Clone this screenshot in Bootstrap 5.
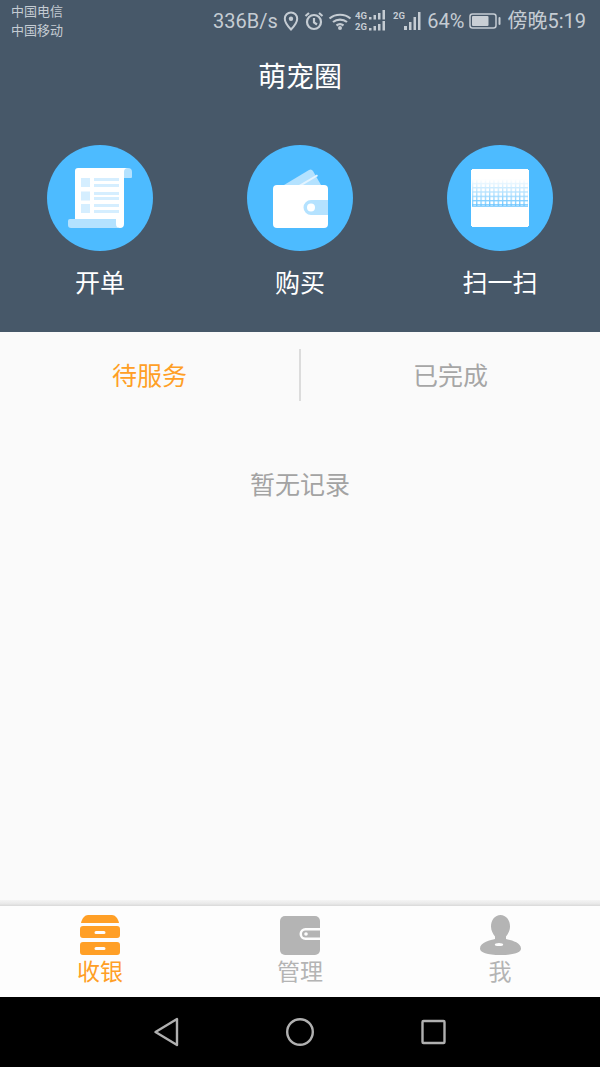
<!DOCTYPE html>
<html lang="zh-CN">
  <head>
    <meta charset="UTF-8" />
    <meta name="viewport" content="width=device-width, initial-scale=1.0" />
    <title>萌宠圈</title>
    <link href="https://cdn.jsdelivr.net/npm/bootstrap@5.3.0/dist/css/bootstrap.min.css" rel="stylesheet" />
    <style>
      html, body { height: 100%; }
      body {
        font-family: Roboto, "Noto Sans CJK SC", sans-serif;
        background: #fafafa;
        overflow: hidden;
      }
      .app-shell { width: 600px; height: 1067px; }

      /* top dark area */
      .top-panel { background: #475869; height: 332px; flex: none; }
      .status-row { height: 40px; padding: 3px 14px 0 11px; color: #c5ccd3; }
      .carrier-col { font-size: 13px; line-height: 19px; width: 202px; margin-top: -1px; }
      .net-speed, .status-txt { font-size: 20px; line-height: 40px; margin-top: -2px; }
      .status-group { height: 37px; }
      .status-ico { display: block; margin-top: -2px; }
      .gap-s3 { margin-left: 3px; }
      .gap-s4 { margin-left: 4px; }
      .gap-s5 { margin-left: 5px; }
      .gap-s6 { margin-left: 6px; }
      .page-title { color: #fff; font-size: 28px; line-height: 30px; margin-top: 23px; text-align: center; }
      .action-row { margin-top: 52px; }
      .action-cell { width: 200px; }
      .action-disc { width: 106px; height: 106px; border-radius: 50%; background: #4dbbff; }
      .action-name { color: #fff; font-size: 25px; line-height: 30px; margin-top: 18px; }

      /* order tabs */
      .tab-strip { height: 88px; flex: none; padding-top: 17px; padding-bottom: 19px; }
      .tab-pick { flex: 1; font-size: 25px; line-height: 52px; padding-top: 2px; text-align: center; color: #a6a6a6; }
      .tab-pick.is-on { color: #ff9f26; }
      .tab-line { width: 2px; background: #dcdcdc; }
      .empty-note { color: #a3a3a3; font-size: 25px; line-height: 30px; text-align: center; margin-top: 51px; }
      .main-fill { flex: 1; }

      /* bottom bar */
      .bar-shade { height: 6px; flex: none; background: linear-gradient(#f4f4f4, #e9e9e9 60%, #d9d9d9); }
      .bottom-bar { height: 91px; flex: none; background: #fdfdfd; }
      .bar-item { width: 200px; padding-top: 9px; color: #b4b4b4; font-size: 23px; line-height: 26px; }
      .bar-item.is-on { color: #ff9f26; }
      .bar-item svg { display: block; margin-bottom: 5px; }
      .sys-nav { height: 70px; flex: none; background: #000; }
    </style>
  </head>
  <body>
    <div class="app-shell d-flex flex-column">
      <header class="top-panel">
        <div class="status-row d-flex align-items-start">
          <div class="carrier-col">
            <div>中国电信</div>
            <div>中国移动</div>
          </div>
          <div class="net-speed">336B/s</div>
          <div class="status-group d-flex align-items-center ms-auto">
            <!-- location pin -->
            <svg class="status-ico" width="16" height="20" viewBox="0 0 16 20">
              <path d="M8 1.500a6.200 6.200 0 0 0-6.200 6.200C1.800 12 8 18.500 8 18.500S14.200 12 14.200 7.700A6.200 6.200 0 0 0 8 1.500z" fill="none" stroke="#c5ccd3" stroke-width="2" />
              <circle cx="8" cy="7.700" r="2.200" fill="#c5ccd3" />
            </svg>
            <!-- alarm -->
            <svg class="status-ico gap-s5" width="20" height="20" viewBox="0 0 20 20" fill="none" stroke="#c5ccd3" stroke-width="2.200">
              <circle cx="10" cy="11" r="7" />
              <path d="M10 7v4.500l3 2M1.500 5 5 2M18.500 5 15 2" />
            </svg>
            <!-- wifi -->
            <svg class="status-ico gap-s4" width="24" height="20" viewBox="0 0 24 20" fill="none" stroke="#c5ccd3" stroke-width="2.200">
              <path d="M1.500 7.500c6-5 15-5 21 0M5 11c4-3.300 10-3.300 14 0M8.500 14.500c2-1.500 5-1.500 7 0" />
              <circle cx="12" cy="17" r="2" fill="#c5ccd3" stroke="none" />
            </svg>
            <!-- dual sim signal -->
            <svg class="status-ico gap-s3" width="33" height="22" viewBox="0 0 33 22" fill="#c5ccd3">
              <text x="0" y="9" font-family="Roboto" font-size="9.500" font-weight="700">4G</text>
              <text x="0" y="20" font-family="Roboto" font-size="9.500" font-weight="700">2G</text>
              <rect x="14" y="7" width="2.500" height="2.500" /><rect x="18.500" y="5" width="2.500" height="4.500" /><rect x="23" y="3" width="2.500" height="6.500" /><rect x="27.500" y="0" width="2.500" height="9.500" />
              <rect x="14" y="18" width="2.500" height="2.500" /><rect x="18.500" y="16" width="2.500" height="4.500" /><rect x="23" y="14" width="2.500" height="6.500" /><rect x="27.500" y="11" width="2.500" height="9.500" />
            </svg>
            <svg class="status-ico gap-s5" width="31" height="22" viewBox="0 0 31 22" fill="#c5ccd3">
              <text x="0" y="9" font-family="Roboto" font-size="9.500" font-weight="700">2G</text>
              <rect x="11" y="16" width="3" height="4" /><rect x="16" y="12" width="2.500" height="8" /><rect x="20.500" y="7" width="2.500" height="13" /><rect x="25" y="2" width="2.500" height="18" />
            </svg>
            <div class="status-txt gap-s3">64%</div>
            <!-- battery -->
            <svg class="status-ico gap-s5" width="32" height="16" viewBox="0 0 32 16">
              <rect x="1" y="1" width="26" height="14" rx="2.500" fill="none" stroke="#c5ccd3" stroke-width="1.500" />
              <rect x="3" y="3" width="16.500" height="10" rx="1" fill="#c9cfd5" />
              <rect x="29.500" y="4" width="2" height="8" rx="1" fill="#c5ccd3" />
            </svg>
            <div class="status-txt gap-s6">傍晚5:19</div>
          </div>
        </div>

        <div class="page-title">萌宠圈</div>

        <div class="action-row d-flex">
          <div class="action-cell d-flex flex-column align-items-center">
            <div class="action-disc d-flex align-items-center justify-content-center">
              <!-- receipt scroll -->
              <svg width="64" height="60" viewBox="0 0 64 60">
                <path d="M2 51h48v9H3a3 3 0 0 1-3-3v-4a2 2 0 0 1 2-2z" fill="#b4e2ff" />
                <path d="M56 0h4a4 4 0 0 1 4 4v5a1 1 0 0 1-1 1h-7z" fill="#b4e2ff" />
                <path d="M10 0h50a4 4 0 0 0-4 4v52a4 4 0 0 1-8 0v-5H7V3a3 3 0 0 1 3-3z" fill="#fff" />
                <g fill="#d5eeff">
                  <rect x="13" y="10" width="9" height="9" /><rect x="13" y="23.500" width="9" height="9" /><rect x="13" y="36" width="9" height="9" />
                  <rect x="26" y="10" width="25" height="3" /><rect x="26" y="16" width="25" height="3" /><rect x="26" y="24" width="25" height="3" /><rect x="26" y="29" width="25" height="3" /><rect x="26" y="36" width="25" height="3" /><rect x="26" y="42" width="25" height="3" />
                </g>
              </svg>
            </div>
            <div class="action-name">开单</div>
          </div>
          <div class="action-cell d-flex flex-column align-items-center">
            <div class="action-disc d-flex align-items-center justify-content-center">
              <!-- wallet -->
              <svg width="55" height="59" viewBox="0 0 55 59">
                <path d="M11 16 36 1a3 3 0 0 1 4 1l8 14z" fill="#b4e2ff" />
                <path d="m26 16 18-10.500 1 1.500-15 9z" fill="#e4f4ff" />
                <rect y="16" width="55" height="43" rx="4" fill="#fff" />
                <path d="M55 31H38a7.500 7.500 0 0 0 0 15h17z" fill="#b4e2ff" />
                <circle cx="38" cy="38.500" r="4" fill="#fff" />
              </svg>
            </div>
            <div class="action-name">购买</div>
          </div>
          <div class="action-cell d-flex flex-column align-items-center">
            <div class="action-disc d-flex align-items-center justify-content-center">
              <!-- scan frame with fading grid -->
              <svg width="58" height="58" viewBox="0 0 58 58">
                <defs>
                  <pattern id="scanGrid" width="4.300" height="4.300" patternUnits="userSpaceOnUse">
                    <path d="M1.500 0v4.300M0 1.500h4.300" stroke="#5cc0ff" stroke-width="1.200" />
                  </pattern>
                  <linearGradient id="scanFade" x1="0" y1="0" x2="0" y2="1">
                    <stop offset="0" stop-color="#fff" stop-opacity="0" />
                    <stop offset="1" stop-color="#fff" stop-opacity="1" />
                  </linearGradient>
                  <mask id="scanMask">
                    <rect y="10" width="58" height="28" fill="url(#scanFade)" />
                  </mask>
                </defs>
                <path d="M1 0h56v1h1v56h-1v1H1v-1H0V1h1z" fill="#fff" />
                <rect x="1" y="10" width="56" height="28" fill="url(#scanGrid)" mask="url(#scanMask)" />
                <path d="M1 37.500h56" stroke="#8fd3ff" stroke-width="1" />
              </svg>
            </div>
            <div class="action-name">扫一扫</div>
          </div>
        </div>
      </header>

      <section class="tab-strip d-flex">
        <div class="tab-pick is-on">待服务</div>
        <div class="tab-line"></div>
        <div class="tab-pick">已完成</div>
      </section>

      <main class="main-fill">
        <div class="empty-note">暂无记录</div>
      </main>

      <div class="bar-shade"></div>
      <nav class="bottom-bar d-flex">
        <div class="bar-item is-on d-flex flex-column align-items-center">
          <!-- drawers -->
          <svg width="40" height="40" viewBox="0 0 40 40" fill="#ff9f26">
            <path d="M8 0h24c3 0 6 3 7 8H1C2 3 5 0 8 0z" />
            <path d="M3 11h34a3 3 0 0 1 3 3v6a3 3 0 0 1-3 3H3a3 3 0 0 1-3-3v-6a3 3 0 0 1 3-3zm13 5a1.500 1.500 0 0 0 0 3h8a1.500 1.500 0 0 0 0-3z" fill-rule="evenodd" />
            <path d="M3 27h34a3 3 0 0 1 3 3v7a3 3 0 0 1-3 3H3a3 3 0 0 1-3-3v-7a3 3 0 0 1 3-3zm13 5a1.500 1.500 0 0 0 0 3h8a1.500 1.500 0 0 0 0-3z" fill-rule="evenodd" />
          </svg>
          <div>收银</div>
        </div>
        <div class="bar-item d-flex flex-column align-items-center">
          <!-- wallet -->
          <svg width="40" height="40" viewBox="0 0 40 40">
            <rect y="1" width="40" height="39" rx="5" fill="#b4b4b4" />
            <path d="M40 13H25.500a6 6 0 0 0 0 12H40v-2.500H25.500a3.500 3.500 0 0 1 0-7H40z" fill="#fdfdfd" />
            <circle cx="26" cy="19" r="1.800" fill="#fdfdfd" />
          </svg>
          <div>管理</div>
        </div>
        <div class="bar-item d-flex flex-column align-items-center">
          <!-- user -->
          <svg width="41" height="40" viewBox="0 0 41 40">
            <path d="M20.500 0c5.500 0 9.500 5 9.500 11.500 0 4-2 7.500-4 10v2.500c4 1 15 3 15 9.500 0 4-7 6.500-20.500 6.500S0 37.500 0 33.500c0-6.500 11-8.500 15-9.500v-2.500c-2-2.500-4-6-4-10C11 5 15 0 20.500 0z" fill="#b4b4b4" />
            <ellipse cx="19" cy="29.500" rx="4.200" ry="1.600" fill="#fdfdfd" />
          </svg>
          <div>我</div>
        </div>
      </nav>

      <div class="sys-nav d-flex align-items-center justify-content-center">
        <svg width="600" height="70" viewBox="0 0 600 70" fill="none" stroke="#b0b0b0" stroke-width="2.400" stroke-linejoin="round">
          <path d="M177 22v26l-21.500-13z" />
          <circle cx="300" cy="35" r="12.800" />
          <rect x="422.500" y="24" width="22" height="22" rx="1" />
        </svg>
      </div>
    </div>
    <script src="https://cdn.jsdelivr.net/npm/bootstrap@5.3.0/dist/js/bootstrap.bundle.min.js"></script>
  </body>
</html>
